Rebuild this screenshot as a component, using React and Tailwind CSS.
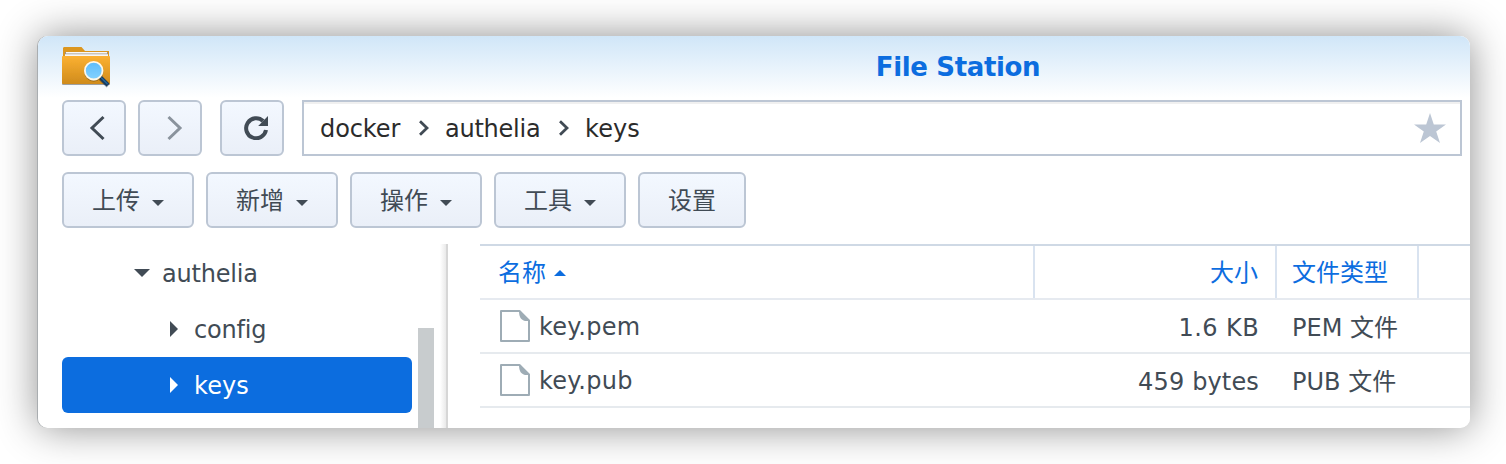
const menus = [
  { label: "上传", menu: true },
  { label: "新增", menu: true },
  { label: "操作", menu: true },
  { label: "工具", menu: true },
  { label: "设置", menu: false },
];

const files = [
  { name: "key.pem", size: "1.6 KB", ext: "PEM", nameTracking: "tracking-[0.25px]", sizeTracking: "tracking-[0.4px]" },
  { name: "key.pub", size: "459 bytes", ext: "PUB", nameTracking: "tracking-[0.25px]", sizeTracking: "tracking-[0.15px]" },
];

const buttonStyle =
  "flex h-14 shrink-0 items-center rounded-md border-2 border-[#bcc6d4] bg-linear-to-b from-[#f3f8ff] to-[#eaeff8]";

function FolderIcon() {
  return (
    <svg width="52" height="44" viewBox="0 0 52 44" className="block shrink-0">
      <defs>
        <linearGradient id="folder" x1="0" y1="0" x2="0" y2="1">
          <stop offset="0" stopColor="#fcb132" />
          <stop offset="1" stopColor="#cf8b1c" />
        </linearGradient>
        <linearGradient id="lens" x1="0" y1="0" x2="0" y2="1">
          <stop offset="0" stopColor="#5dbcfb" />
          <stop offset="1" stopColor="#83d2ff" />
        </linearGradient>
        <filter id="soft" x="-20%" y="-20%" width="140%" height="160%">
          <feDropShadow dx="0" dy="0.8" stdDeviation="0.6" floodOpacity="0.45" />
        </filter>
      </defs>
      <path d="M1 2.5Q1 1 2 1H19.5L23 5H47V20H1Z" fill="#dc961f" />
      <path d="M3 6H46V10H3Z" fill="#9d9285" />
      <path d="M4 6H45V7.6H4ZM3 8.2H46V10.4H3Z" fill="#f7f7f7" />
      <path d="M0 11Q0 10 1 10H47Q48 10 48 11V37Q48 38 47 38H1Q0 38 0 37Z" fill="url(#folder)" filter="url(#soft)" />
      <path d="M38.5 31.5L46 39" stroke="#183a5e" strokeWidth="4" filter="url(#soft)" />
      <path d="M39 31.5L45.5 38" stroke="#236699" strokeWidth="1.4" />
      <circle cx="31.7" cy="24.7" r="8.8" fill="url(#lens)" stroke="#fff8e8" strokeWidth="1.8" filter="url(#soft)" />
    </svg>
  );
}

function Crumb() {
  return (
    <svg width="10" height="16" viewBox="0 0 10 16" fill="none" stroke="#414b55" strokeWidth="2.8" className="block shrink-0">
      <path d="M1 1.2L8 8L1 14.8" />
    </svg>
  );
}

function FileIcon() {
  return (
    <svg width="30" height="32" viewBox="0 0 30 32" className="block shrink-0">
      <path d="M1 1H19.5L29 10.5V31H1Z" fill="#fff" stroke="#9eacb5" strokeWidth="2" strokeLinejoin="round" />
      <path d="M19 1L29 11H25C21 10 19 7 19 1Z" fill="#9eacb5" />
    </svg>
  );
}

export default function App() {
  return (
    <div className="h-[464px] w-[1506px] overflow-hidden bg-white pt-9 pl-[38px] font-['DejaVu_Sans','Noto_Sans_CJK_SC',sans-serif] text-[24px] leading-[32px] text-[#414b55]">
      <div className="h-[392px] w-[1432px] rounded-[10px] shadow-[-1px_0_0_#a9adb0,0_0_40px_rgba(0,0,0,0.45)]">
        <div className="flex h-full w-full flex-col overflow-hidden rounded-[10px] bg-white">
          <header className="flex h-16 shrink-0 bg-linear-to-b from-[#d0e6f8] to-white to-[62px] pt-2.5 pl-6">
            <FolderIcon />
            <h1 className="ml-[662px] w-[364px] pt-px text-center text-[26px] leading-[40px] font-bold tracking-[-0.35px] whitespace-nowrap text-[#0c6ddf]">
              File Station
            </h1>
          </header>

          <div className="flex h-14 shrink-0 pl-6">
            <button className={`${buttonStyle} w-16 pl-[25px]`}>
              <svg width="16" height="26" viewBox="0 0 16 26" fill="none" stroke="#414b55" strokeWidth="3" className="block">
                <path d="M14.5 2L3 13L14.5 24" />
              </svg>
            </button>
            <button className={`${buttonStyle} ml-3 w-16 pl-[27px]`}>
              <svg width="16" height="26" viewBox="0 0 16 26" fill="none" stroke="#8a939d" strokeWidth="3" className="block">
                <path d="M1.5 2L13 13L1.5 24" />
              </svg>
            </button>
            <button className={`${buttonStyle} ml-[18px] w-16 pl-[22px]`}>
              <svg width="24" height="24" viewBox="0 0 24 24" className="block">
                <path d="M22 14A10 10 0 1 1 19.1 5" fill="none" stroke="#414b55" strokeWidth="4" />
                <path d="M24 0V10H14.2Z" fill="#414b55" />
              </svg>
            </button>
            <div className="ml-[18px] flex w-[1160px] items-center border-2 border-[#bcc6d4] bg-white pr-3.5 pl-4 text-[#2b2b2b] shadow-[inset_0_2px_0_#f0f0f0]">
              <span className="w-[99px] pt-0.5 tracking-[-0.1px]">docker</span>
              <Crumb />
              <span className="ml-4 w-[99px] pt-0.5 tracking-[-0.25px]">authelia</span>
              <span className="ml-[15px]"><Crumb /></span>
              <span className="ml-4 pt-0.5 tracking-[0.1px]">keys</span>
              <svg width="32" height="30" viewBox="0 0 32 30" className="ml-auto block shrink-0">
                <path d="M16 0L19.8 11.5H32L22.2 18.6L26 30L16 23L6 30L9.8 18.6L0 11.5H12.2Z" fill="#bcc6d4" />
              </svg>
            </div>
          </div>

          <div className="mt-4 flex h-14 shrink-0 gap-3 pl-6">
            {menus.map(({ label, menu }) => (
              <button key={label} className={`${buttonStyle} ${menu ? "w-[132px]" : "w-[108px]"} pl-7`}>
                <span className="pt-0.5">{label}</span>
                {menu && (
                  <svg width="12" height="6" viewBox="0 0 12 6" className="mt-1.5 ml-3 block">
                    <path d="M0 0H12L6 6Z" fill="#414b55" />
                  </svg>
                )}
              </button>
            ))}
          </div>

          <div className="mt-4 flex h-[184px] shrink-0">
            <nav className="w-[374px] pt-px pl-6">
              <div className="flex h-14 items-center pl-[72px]">
                <svg width="16" height="8" viewBox="0 0 16 8" className="mr-3 block">
                  <path d="M0 0H16L8 8Z" fill="#414b55" />
                </svg>
                <span className="pt-0.5 tracking-[-0.2px]">authelia</span>
              </div>
              <div className="flex h-14 items-center pl-[108px]">
                <svg width="8" height="16" viewBox="0 0 8 16" className="mr-4 block">
                  <path d="M0 0V16L8 8Z" fill="#414b55" />
                </svg>
                <span className="pt-0.5 tracking-[-0.2px]">config</span>
              </div>
              <div className="flex h-14 items-center rounded-md bg-[#0c6ddf] pl-[108px] text-white">
                <svg width="8" height="16" viewBox="0 0 8 16" className="mr-4 block">
                  <path d="M0 0V16L8 8Z" fill="#fff" />
                </svg>
                <span className="pt-0.5 tracking-[0.1px]">keys</span>
              </div>
            </nav>
            <div className="mt-[84px] ml-1.5 w-4 bg-[#c8ccce]" />
            <div className="ml-1.5 w-2 border-r-2 border-[#d6d6d6] bg-linear-to-r from-white to-[#e9e9e9]" />

            <main className="ml-8 w-[990px]">
              <div className="flex h-14 border-t-2 border-b-2 border-t-[#cfd9e5] border-b-[#e6eaf0] text-[#0c6ddf]">
                <div className="flex w-[555px] items-center border-r-2 border-[#d9e3f0] pl-[18px]">
                  <span className="pt-0.5">名称</span>
                  <svg width="12" height="6" viewBox="0 0 12 6" className="mt-0.5 ml-2 block">
                    <path d="M0 6H12L6 0Z" fill="#0c6ddf" />
                  </svg>
                </div>
                <div className="flex w-[242px] items-center justify-end border-r-2 border-[#d9e3f0] pt-0.5 pr-[17px]">大小</div>
                <div className="flex w-[142px] items-center border-r-2 border-[#d9e3f0] pt-0.5 pl-[15px]">文件类型</div>
              </div>
              {files.map((f) => (
                <div key={f.name} className="flex h-[54px] items-center border-b-2 border-[#e6eaee]">
                  <div className="flex w-[555px] items-center pl-5">
                    <FileIcon />
                    <span className={`ml-[9px] pt-0.5 ${f.nameTracking}`}>{f.name}</span>
                  </div>
                  <div className={`w-[242px] pt-1 pr-[18px] text-right ${f.sizeTracking}`}>{f.size}</div>
                  <div className="w-[158px] pt-1 pl-[15px]">{f.ext} 文件</div>
                </div>
              ))}
            </main>
          </div>
        </div>
      </div>
    </div>
  );
}
